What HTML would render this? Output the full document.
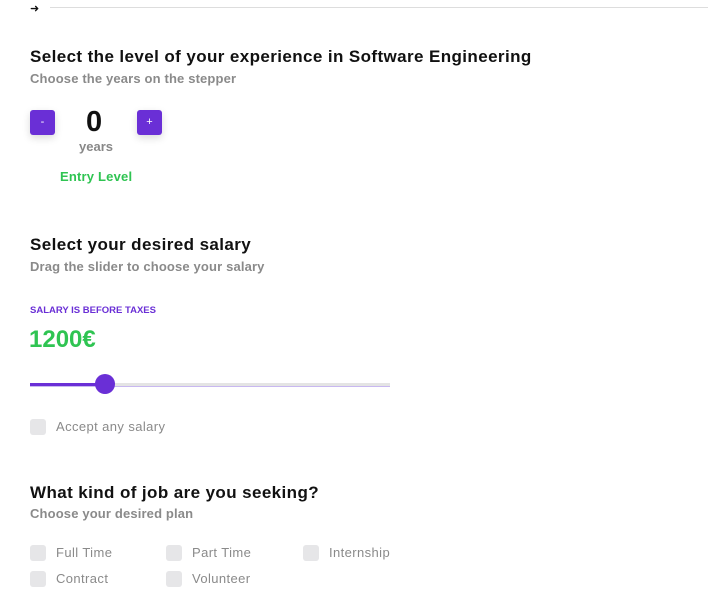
<!DOCTYPE html>
<html><head><style>
body{margin:0;width:712px;height:598px;background:#fff;font-family:"Liberation Sans",sans-serif;position:relative;overflow:hidden}
.a{position:absolute;white-space:nowrap}
h2{margin:0;font-size:17px;letter-spacing:0.4px;font-weight:bold;color:#111;position:absolute;white-space:nowrap}
.sub{font-size:13px;letter-spacing:0.15px;color:#8a8a8a;font-weight:bold}
.btn{position:absolute;width:25px;height:25px;background:#6a2fd6;border-radius:3px;color:#fff;font-size:11px;text-align:center;line-height:25px;box-shadow:0 3px 8px rgba(0,0,0,.15)}
.cb{position:absolute;width:16px;height:16px;background:#e6e6e8;border-radius:3px}
.lbl{position:absolute;font-size:13px;letter-spacing:0.4px;color:#8a8a8a;white-space:nowrap}
</style></head><body>
<div class="a" style="left:30px;top:2px;font-size:11px;color:#111">&#10140;</div>
<div class="a" style="left:50px;top:7px;width:658px;height:1px;background:#ddd"></div>
<h2 style="left:30px;top:47px">Select the level of your experience in Software Engineering</h2>
<div class="a sub" style="left:30px;top:71px">Choose the years on the stepper</div>
<div class="btn" style="left:30px;top:110px">-</div>
<div class="btn" style="left:137px;top:110px">+</div>
<div class="a" style="left:86px;top:106px;font-size:29px;font-weight:bold;color:#111">0</div>
<div class="a" style="left:79px;top:139px;font-size:13px;font-weight:bold;color:#888">years</div>
<div class="a" style="left:60px;top:169px;font-size:13px;font-weight:bold;color:#2fc452;letter-spacing:0.2px">Entry Level</div>
<h2 style="left:30px;top:235px">Select your desired salary</h2>
<div class="a sub" style="left:30px;top:259px">Drag the slider to choose your salary</div>
<div class="a" style="left:30px;top:305px;font-size:9.5px;font-weight:bold;color:#6a2fd6">SALARY IS BEFORE TAXES</div>
<div class="a" style="left:29px;top:326px;font-size:24px;font-weight:bold;color:#2fc452">1200€</div>
<div class="a" style="left:30px;top:383px;width:360px;height:3px;background:#e4e4e4;border-bottom:1px solid #c8b8f0"></div>
<div class="a" style="left:30px;top:383px;width:75px;height:3px;background:#6a2fd6"></div>
<div class="a" style="left:95px;top:374px;width:20px;height:20px;border-radius:50%;background:#6a2fd6"></div>
<div class="cb" style="left:30px;top:419px"></div><div class="lbl" style="left:56px;top:419px">Accept any salary</div>
<h2 style="left:30px;top:483px">What kind of job are you seeking?</h2>
<div class="a sub" style="left:30px;top:506px">Choose your desired plan</div>
<div class="cb" style="left:30px;top:545px"></div><div class="lbl" style="left:56px;top:545px">Full Time</div>
<div class="cb" style="left:166px;top:545px"></div><div class="lbl" style="left:192px;top:545px">Part Time</div>
<div class="cb" style="left:303px;top:545px"></div><div class="lbl" style="left:329px;top:545px">Internship</div>
<div class="cb" style="left:30px;top:571px"></div><div class="lbl" style="left:56px;top:571px">Contract</div>
<div class="cb" style="left:166px;top:571px"></div><div class="lbl" style="left:192px;top:571px">Volunteer</div>
</body></html>
